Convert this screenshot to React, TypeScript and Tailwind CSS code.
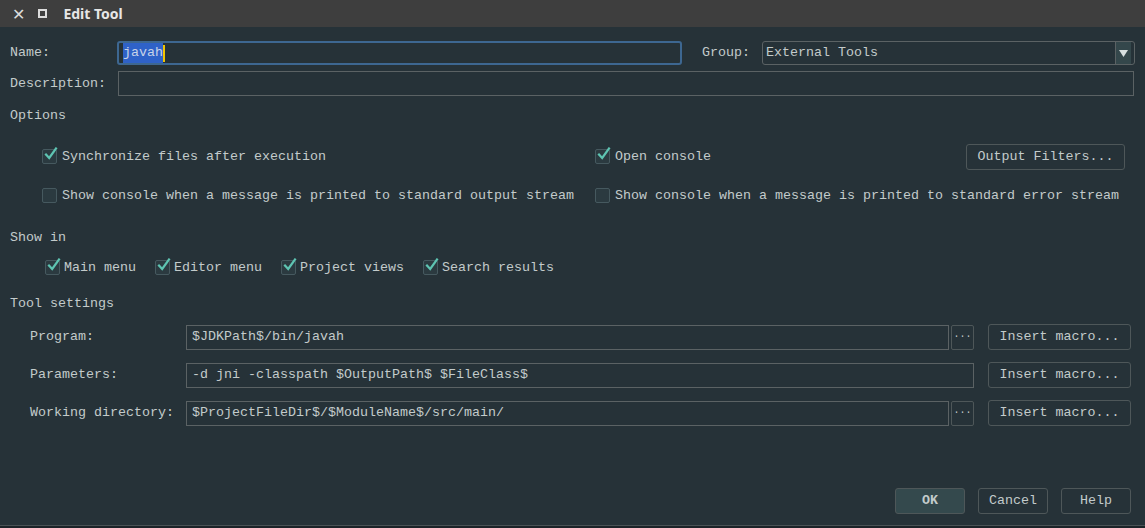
import React from "react";

const mono = { fontFamily: '"Liberation Mono", "DejaVu Sans Mono", monospace' };

function Check({ checked }: { checked: boolean }) {
  return (
    <span className="relative inline-flex h-[15px] w-[15px] shrink-0 rounded-[2px] border border-[#46595f] bg-[#2b3a40]">
      {checked && (
        <svg className="absolute -top-[3px] left-[1px]" width="14" height="14" viewBox="0 0 14 14">
          <path d="M2 7.5 L5.2 11 L12 1.5" fill="none" stroke="#5ec4b2" strokeWidth="2.2" strokeLinecap="square" />
        </svg>
      )}
    </span>
  );
}

function CheckItem({ checked, label, gap = "gap-[5px]" }: { checked: boolean; label: string; gap?: string }) {
  return (
    <div className={`flex items-center whitespace-nowrap ${gap}`}>
      <Check checked={checked} />
      <span>{label}</span>
    </div>
  );
}

function Btn({ children, className = "" }: { children: React.ReactNode; className?: string }) {
  return (
    <div className={`flex h-[26px] shrink-0 items-center justify-center rounded-[3px] border border-[#4e5759] ${className}`}>
      {children}
    </div>
  );
}

function Field({ value, className = "" }: { value: string; className?: string }) {
  return (
    <div className={`flex h-[25px] shrink-0 items-center border border-[#5b6264] px-[5px] ${className}`}>
      {value}
    </div>
  );
}

function Row({ label, value, dots }: { label: string; value: string; dots: boolean }) {
  return (
    <div className="flex h-[26px] items-center">
      <div className="w-[176px] shrink-0 whitespace-nowrap pl-[20px]">{label}</div>
      {dots ? (
        <>
          <Field value={value} className="w-[763px]" />
          <div className="ml-[2px] flex h-[25px] w-[23px] shrink-0 items-center justify-center rounded-[2px] border border-[#4e5759] text-[10px] leading-none">
            ···
          </div>
        </>
      ) : (
        <Field value={value} className="w-[788px]" />
      )}
      <Btn className="ml-[14px] w-[143px]">Insert macro...</Btn>
    </div>
  );
}

export default function App() {
  return (
    <div className="flex h-[528px] w-[1145px] flex-col bg-[#263238] text-[13.33px] text-[#c3cbcb]" style={mono}>
      <div
        className="flex h-[27px] items-center bg-[#3e3e3e] text-white"
        style={{ fontFamily: '"Noto Sans", "DejaVu Sans", sans-serif' }}
      >
        <span className="ml-[12px] text-[16px] font-bold leading-none text-[#dcdcdc]">✕</span>
        <span className="ml-[13px] inline-block h-[9px] w-[9px] border-[2px] border-[#dcdcdc]"></span>
        <span className="ml-[16px] text-[14px] font-bold text-[#e6e6e6]">Edit Tool</span>
      </div>

      <div className="flex flex-1 flex-col px-[10px]">
        <div className="mt-[14px] flex h-[24px] items-center">
          <div className="w-[107px]">Name:</div>
          <div className="flex h-[24px] w-[565px] items-center rounded-[3px] border-[2px] border-[#3d6791] px-[4px]">
            <span className="bg-[#2f62c8] text-[#c8d4e8]">javah</span>
            <span className="h-[17px] w-[2px] bg-[#f2c500]"></span>
          </div>
          <div className="ml-[20px] w-[60px]">Group:</div>
          <div className="flex h-[24px] w-[373px] items-center rounded-[3px] border border-[#5b6264] pl-[3px]">
            <span className="flex-1">External Tools</span>
            <div className="mr-[3px] flex h-[22px] w-[16px] items-center justify-center border-l border-[#5b6264] bg-[#34474b]">
              <svg width="9" height="7" viewBox="0 0 9 7">
                <path d="M0 0 H9 L4.5 7 Z" fill="#d8e0e0" />
              </svg>
            </div>
          </div>
        </div>

        <div className="mt-[6px] flex h-[25px] items-center">
          <div className="w-[108px]">Description:</div>
          <div className="h-[25px] w-[1016px] border border-[#5b6264]"></div>
        </div>

        <div className="mt-[8px] h-[24px] leading-[24px]">Options</div>

        <div className="mt-[16px] flex h-[26px] items-center">
          <div className="ml-[32px] w-[553px]">
            <CheckItem checked label="Synchronize files after execution" />
          </div>
          <div className="w-[371px]">
            <CheckItem checked label="Open console" />
          </div>
          <Btn className="w-[159px]">Output Filters...</Btn>
        </div>

        <div className="mt-[13px] flex h-[26px] items-center">
          <div className="ml-[32px] w-[553px]">
            <CheckItem checked={false} label="Show console when a message is printed to standard output stream" />
          </div>
          <CheckItem checked={false} label="Show console when a message is printed to standard error stream" />
        </div>

        <div className="mt-[19px] h-[20px] leading-[20px]">Show in</div>

        <div className="mt-[10px] flex h-[20px] items-center gap-[19px] pl-[35px]">
          <CheckItem checked label="Main menu" gap="gap-[4px]" />
          <CheckItem checked label="Editor menu" gap="gap-[4px]" />
          <CheckItem checked label="Project views" gap="gap-[4px]" />
          <CheckItem checked label="Search results" gap="gap-[4px]" />
        </div>

        <div className="mt-[16px] h-[20px] leading-[20px]">Tool settings</div>

        <div className="mt-[10px] flex flex-col gap-[12px]">
          <Row label="Program:" value="$JDKPath$/bin/javah" dots />
          <Row label="Parameters:" value="-d jni -classpath $OutputPath$ $FileClass$" dots={false} />
          <Row label="Working directory:" value="$ProjectFileDir$/$ModuleName$/src/main/" dots />
        </div>

        <div className="flex-1"></div>

        <div className="mb-[11px] flex justify-end gap-[13px] pr-[4px]">
          <Btn className="w-[70px] bg-[#34494d] font-bold">OK</Btn>
          <Btn className="w-[70px]">Cancel</Btn>
          <Btn className="w-[70px]">Help</Btn>
        </div>
      </div>
      <div className="h-[1px] bg-[#4a5255]"></div>
      <div className="h-[2px] bg-[#1c2328]"></div>
    </div>
  );
}
